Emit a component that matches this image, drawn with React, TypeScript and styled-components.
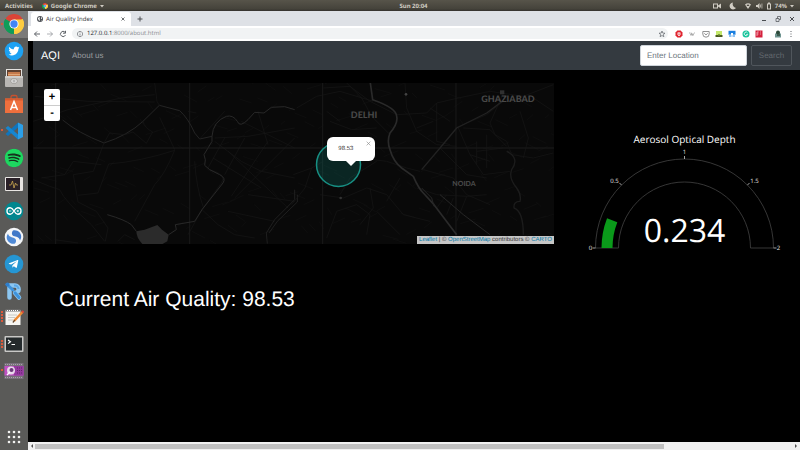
import React from 'react';
import styled, { createGlobalStyle } from 'styled-components';
import { FaTwitter, FaSpotify, FaTelegramPlane } from 'react-icons/fa';

const ui = '"Noto Sans", "Open Sans", sans-serif';
const body = '"Liberation Sans", Arial, sans-serif';
const plot = '"Open Sans", "Noto Sans", sans-serif';

const GlobalStyle = createGlobalStyle`
  *, *::before, *::after { box-sizing: border-box; }
  body { margin: 0; background: #000; font-family: ${body}; text-rendering: geometricPrecision; }
  button, input { font: inherit; margin: 0; text-rendering: inherit; }
  button { padding: 0; border: 0; background: none; color: inherit; }
  ul { list-style: none; margin: 0; padding: 0; }
  h1, h2, p { margin: 0; font-weight: 400; }
  a { text-decoration: none; color: inherit; }
  svg { display: block; }
`;

const Desktop = styled.div`
  min-height: 100vh;
  display: flex;
  flex-direction: column;
  overflow: hidden;
`;

/* System bar */

const SystemBar = styled.header`
  flex: 0 0 11px;
  display: grid;
  grid-template-columns: 1fr auto 1fr;
  align-items: center;
  padding: 0 6px 0 5px;
  background: linear-gradient(#57544a, #45433b 80%, #34322d);
  color: #d0ccc3;
  font: 700 6px/10px ${ui};
`;

const SystemGroup = styled.div<{ $end?: boolean }>`
  display: flex;
  align-items: center;
  justify-content: ${(p) => (p.$end ? 'flex-end' : 'flex-start')};
  gap: ${(p) => (p.$end ? '7px' : '9px')};
`;

const SystemButton = styled.button`
  display: flex;
  align-items: center;
  gap: 3px;
`;

const Clock = styled.time`
  padding-left: 28px;
`;

const Workspace = styled.div`
  flex: 1;
  display: flex;
  min-height: 0;
`;

/* Dock */

const Dock = styled.nav`
  flex: 0 0 28px;
  display: flex;
  flex-direction: column;
  justify-content: space-between;
  background: #5a5a58;
`;

const DockList = styled.ul`
  flex: 0 1 373px;
  display: grid;
  grid-auto-rows: 1fr;
`;

const DockItem = styled.li<{ $active?: boolean }>`
  display: flex;
  background: ${(p) => (p.$active ? '#7b7a78' : 'transparent')};
`;

const DockButton = styled.button`
  flex: 1;
  display: grid;
  grid-template-columns: 4px 20px;
  align-items: center;
`;

const RunningDots = styled.span<{ $count: number }>`
  width: 2px;
  height: ${(p) => p.$count * 3}px;
  margin-left: 1px;
  background: repeating-linear-gradient(#d9583a 0 2px, transparent 2px 3px);
`;

const AppsButton = styled.button`
  height: 27px;
  display: grid;
  place-items: center;
`;

/* Browser */

const Browser = styled.main`
  flex: 1;
  min-width: 0;
  display: flex;
  flex-direction: column;
  background: #000;
`;

const TabStrip = styled.div`
  flex: 0 0 15px;
  display: flex;
  align-items: flex-end;
  padding: 0 4px 0 3px;
  background: #dee1e6;
  color: #4a4d51;
`;

const Tab = styled.div`
  flex: 0 0 100px;
  height: 14px;
  display: flex;
  align-items: center;
  gap: 3px;
  padding: 0 4px 0 6px;
  border-radius: 3px 3px 0 0;
  background: #fff;
  font: 6px/14px ${ui};
  color: #3c4043;
`;

const TabTitle = styled.span`
  flex: 1;
  white-space: nowrap;
`;

const IconButton = styled.button`
  display: grid;
  place-items: center;
  width: 8px;
  height: 14px;
`;

const NewTab = styled(IconButton)`
  margin-left: 5px;
`;

const WindowControls = styled.div`
  margin-left: auto;
  display: flex;
  gap: 6px;
`;

const Toolbar = styled.div`
  flex: 0 0 15px;
  display: flex;
  align-items: center;
  padding: 0 5px;
  background: #fff;
  color: #5f6368;
`;

const NavButtons = styled.div`
  display: flex;
  gap: 5px;
`;

const AddressBar = styled.div`
  flex: 1;
  height: 11px;
  display: flex;
  align-items: center;
  gap: 4px;
  margin: 0 7px 0 5px;
  padding: 0 2px 0 5px;
  border-radius: 6px;
  background: #f1f3f4;
`;

const Address = styled.span`
  flex: 1;
  font: 6px/11px ${plot};
  color: #8a8d91;

  b {
    font-weight: 400;
    color: #202124;
  }
`;

const Extensions = styled.div`
  flex: 0 0 88px;
  display: flex;
  justify-content: space-between;
`;

const ProfileArea = styled.div`
  display: flex;
  gap: 5px;
  margin-left: 6px;
  padding-left: 5px;
`;

/* Web page */

const Page = styled.div`
  flex: 1;
  min-width: 0;
  padding-left: 5px;
  background: #000;
  color: #fff;
`;

const Navbar = styled.nav`
  display: flex;
  align-items: center;
  gap: 12px;
  padding: 4px 8px;
  background: #343a40;
`;

const Brand = styled.a`
  font-size: 11px;
  line-height: 20px;
  color: #fff;
`;

const NavLink = styled.a`
  font-size: 8px;
  line-height: 20px;
  color: #999c9f;
`;

const SearchForm = styled.form`
  margin-left: auto;
  display: flex;
  gap: 4px;
  height: 21px;
`;

const SearchInput = styled.input`
  width: 107px;
  padding: 0 6px;
  border: 1px solid #ced4da;
  border-radius: 2px;
  background: #fff;
  font-size: 8px;
  color: #495057;

  &::placeholder {
    color: #6c757d;
    opacity: 1;
  }
`;

const SearchButton = styled.button`
  width: 41px;
  border: 1px solid #50565c;
  border-radius: 2px;
  font-size: 8px;
  color: #62686e;
`;

const Columns = styled.div`
  display: grid;
  grid-template-columns: 521fr 246fr;
  align-items: start;
  padding-top: 13px;
`;

const MapView = styled.section`
  position: relative;
  height: 161px;
  overflow: hidden;
  background: #090909;
`;

const MapDrawing = styled.svg`
  width: 100%;
  height: 100%;
`;

const ZoomControl = styled.div`
  position: absolute;
  top: 6px;
  left: 11px;
  width: 16px;
  border-radius: 2px;
  background: #fff;
  color: #000;
  font: 700 11px/15px ${body};
`;

const ZoomButton = styled.button`
  display: block;
  width: 100%;
  height: 16px;

  & + & {
    border-top: 1px solid #ccc;
  }
`;

const Popup = styled.div`
  position: absolute;
  top: 33.5%;
  left: 56.5%;
  width: 48px;
  padding: 8px 11px;
  border-radius: 6px;
  background: #fff;
  color: #333;
  font-size: 6px;
  line-height: 8px;

  &::after {
    content: '';
    position: absolute;
    top: 100%;
    left: 50%;
    margin: -1px 0 0 -6px;
    border: 6px solid transparent;
    border-top-color: #fff;
    border-bottom: 0;
  }
`;

const PopupClose = styled.button`
  position: absolute;
  top: 4px;
  right: 4px;
  color: #888;
`;

const Attribution = styled.p`
  position: absolute;
  right: 0;
  bottom: 0;
  padding: 0 2px;
  background: #c6c6c6;
  color: #333;
  font-size: 6px;
  line-height: 8px;
  white-space: nowrap;

  a {
    color: #0078a8;
  }
`;

const GaugePanel = styled.section`
  padding: 50px 0 0 15px;
  text-align: center;
  font-family: ${plot};
`;

const GaugeTitle = styled.h2`
  font-size: 10px;
  line-height: 13px;
`;

const GaugeChart = styled.svg`
  display: block;
  width: 100%;
  height: 108px;
  font-family: ${plot};
`;

const Reading = styled.h1`
  padding: 33px 26px 0;
  font-size: 21px;
  line-height: 26px;
`;

const Scrollbar = styled.div`
  flex: 0 0 6px;
  display: flex;
  align-items: center;
  justify-content: space-between;
  gap: 2px;
  padding: 0 2px;
  background: #f1f1f1;
  color: #505050;
`;

const ScrollTrack = styled.div`
  flex: 1;
  height: 5px;
`;

const ScrollThumb = styled.div`
  width: 83%;
  height: 100%;
  background: #c1c1c1;
`;

/* Icons */

const ChromeIcon = ({ size }: { size: number }) => (
  <svg width={size} height={size} viewBox="0 0 48 48" aria-hidden="true">
    <path d="M24 24 3.2 12A24 24 0 0 1 44.8 12z" fill="#db4437" />
    <path d="M24 24 44.8 12A24 24 0 0 1 24 48z" fill="#ffcd40" />
    <path d="M24 24v24A24 24 0 0 1 3.2 12z" fill="#0f9d58" />
    <path d="M24 13h20.8A24 24 0 0 1 24 48l9.5-18.5z" fill="#ffcd40" />
    <path d="M3.2 12 14.5 29.5 24 35l-6 12.2A24 24 0 0 1 3.2 12z" fill="#0f9d58" />
    <circle cx="24" cy="24" r="11" fill="#fff" />
    <circle cx="24" cy="24" r="8.8" fill="#4285f4" />
  </svg>
);

const Glyph = ({ children }: { children: React.ReactNode }) => (
  <svg width="20" height="20" viewBox="0 0 20 20" fill="none" aria-hidden="true">
    {children}
  </svg>
);

const TwitterApp = () => (
  <Glyph>
    <circle cx="10" cy="10" r="9.3" fill="#1da1f2" />
    <FaTwitter x="4.5" y="4.5" size={11} color="#fff" />
  </Glyph>
);

const FilesApp = () => (
  <Glyph>
    <path d="M2 1h16v9H2z" fill="#e4e2df" />
    <path d="M3 2h14v6H3z" fill="#5e4030" />
    <path d="M4 4h12v4H4z" fill="#c57a4c" />
    <path d="M4 6h12v1H4z" fill="#e0a678" />
    <rect x="1" y="8" width="18" height="11" rx="1" fill="#b9b7b4" />
    <path d="M1 9h18" stroke="#e6e4e1" />
    <rect x="7" y="11" width="6" height="4" rx="1.5" fill="#efefef" stroke="#8a8885" strokeWidth=".7" />
    <path d="M8.500 13h3" stroke="#777" />
  </Glyph>
);

const SoftwareApp = () => (
  <Glyph>
    <path d="M7 5V3q0-1.500 1.500-1.500h3Q13 1.500 13 3v2" stroke="#c9502d" strokeWidth="1.300" />
    <path d="M1 4.500h18V19H1z" fill="#ee6f3d" />
    <path d="M1 4.500h18v2H1z" fill="#d85a2e" />
    <path d="m6.500 16 3.500-8.500 3.500 8.500M7.500 13.500h5" stroke="#fff" strokeWidth="1.500" />
  </Glyph>
);

const CodeApp = () => (
  <Glyph>
    <path d="M14 1.500 19 4v12l-5 2.500z" fill="#2b9fe8" />
    <path d="m14 1.500v5L4 15l-2.500-2z" fill="#0f75bd" />
    <path d="m14 18.500v-5L4 5 1.500 7z" fill="#1686d0" />
  </Glyph>
);

const SpotifyApp = () => (
  <Glyph>
    <circle cx="10" cy="10" r="9" fill="#16301e" />
    <FaSpotify x="0.500" y="0.500" size={19} color="#1ed760" />
  </Glyph>
);

const MonitorApp = () => (
  <Glyph>
    <rect x="1" y="3" width="18" height="14" rx="1" fill="#e9e6e3" />
    <path d="M2 4h14v12H2z" fill="#2a2027" />
    <path d="M5 11h2l1.500-4 1.500 7 1.500-5 1 2H14" stroke="#c9a650" strokeWidth=".8" />
  </Glyph>
);

const ArduinoApp = () => (
  <Glyph>
    <circle cx="10" cy="10" r="9.3" fill="#00878f" />
    <path
      d="M10 10C8.500 7.500 7.500 6.800 6.200 6.800a3.200 3.200 0 0 0 0 6.400c1.300 0 2.300-.7 3.800-3.200s2.500-3.200 3.800-3.200a3.200 3.200 0 0 1 0 6.400c-1.300 0-2.300-.7-3.800-3.200z"
      stroke="#fff"
      strokeWidth="1.400"
    />
    <path d="M5 10h2.400M12.600 10H15M13.800 8.800v2.400" stroke="#fff" strokeWidth=".8" />
  </Glyph>
);

const SimplenoteApp = () => (
  <Glyph>
    <circle cx="10" cy="10" r="9.300" fill="#f4f6f8" />
    <path d="M15.500 5.200A7 7 0 0 1 16 13.500C15.500 10.500 13 10 10.500 9.300 7.500 8.500 7.300 5.500 9 3.400c2.500-.8 5 .3 6.500 1.800z" fill="#4078c8" />
    <path d="M4.500 14.800A7 7 0 0 1 4 6.500c.5 3 3 3.500 5.500 4.200 3 .8 3.200 3.800 1.500 5.900-2.500.8-5-.3-6.500-1.800z" fill="#4f8ad6" />
  </Glyph>
);

const TelegramApp = () => (
  <Glyph>
    <circle cx="10" cy="10" r="9.300" fill="#2596d3" />
    <FaTelegramPlane x="4" y="4.500" size={11} color="#fff" />
  </Glyph>
);

const RoutesApp = () => (
  <Glyph>
    <path d="M5.500 16.500V4.500H11a3.600 3.600 0 0 1 0 7.300l4 4.700" stroke="#8cc6f0" strokeWidth="4.500" strokeLinejoin="round" strokeLinecap="round" />
    <path d="M3 3.500 9 9M11 11.800l4 4.700" stroke="#3d93dc" strokeWidth="3" strokeLinecap="round" />
    <path d="M10 4.500h1a3.600 3.600 0 0 1 3.500 3.600" stroke="#5aa8e6" strokeWidth="2" />
    <circle cx="3.500" cy="3.500" r="2" fill="#2f7ecb" />
  </Glyph>
);

const NotesApp = () => (
  <Glyph>
    <path d="M1.500 3h15v15h-15z" fill="#f6f5f1" />
    <path d="M1.500 2.500h15v2h-15z" fill="#777" />
    <path d="M3 3.500h12" stroke="#fff" strokeDasharray="1 1" />
    <path d="M4 8h9M4 10.500h7M4 13h5" stroke="#bdbdb8" strokeWidth=".8" />
    <path d="m18.500 5-8.500 9" stroke="#ee8a32" strokeWidth="2.500" />
    <path d="m10.800 13.200-2 2.300" stroke="#5f4630" strokeWidth="1.200" />
    <path d="m19.400 4-1.200 1.300" stroke="#d6433d" strokeWidth="2.500" />
  </Glyph>
);

const TerminalApp = () => (
  <Glyph>
    <rect x=".5" y="2" width="19" height="16" rx="1" fill="#c8c8c6" />
    <path d="M2 3.500h16v13H2z" fill="#242a2c" />
    <path d="m4 6 2.500 1.800L4 9.600M7.500 10.500h3.500" stroke="#fff" strokeWidth="1.100" />
  </Glyph>
);

const VideoApp = () => (
  <Glyph>
    <rect x=".5" y="2" width="19" height="16" fill="#77707a" />
    <path d="M.5 5h19v9.500H.5z" fill="#c04fc4" />
    <path d="M10 5h9.500v9.500H10z" fill="#94389e" />
    <path d="M1 3.500h18M1 16.500h18" stroke="#aaa3ad" strokeWidth="1" strokeDasharray="1 1" />
    <circle cx="7" cy="9.500" r="4" fill="#e9d9ec" />
    <circle cx="7.500" cy="9" r="2" fill="#6a3a78" />
    <path d="m3 14 3-3" stroke="#fff" strokeWidth="1.500" />
    <path d="M13 7h5M13 9.500h5M13 12h5" stroke="#5f2468" strokeWidth="1" strokeDasharray="1 1" />
  </Glyph>
);

const AppGrid = () => (
  <svg width="14" height="14" viewBox="0 0 14 14" fill="#f2f2f0" aria-hidden="true">
    {[2, 7, 12].map((y) => [2, 7, 12].map((x) => <circle key={`${x}-${y}`} cx={x} cy={y} r="1.300" />))}
  </svg>
);

const Line = ({ d, size = 8, width = 1 }: { d: string; size?: number; width?: number }) => (
  <svg width={size} height={size} viewBox="0 0 8 8" fill="none" stroke="currentColor" strokeWidth={width} aria-hidden="true">
    <path d={d} />
  </svg>
);

const Solid = ({ d, width = 8 }: { d: string; width?: number }) => (
  <svg width={width} height="8" viewBox={`0 0 ${width} 8`} fill="currentColor" fillRule="evenodd" aria-hidden="true">
    <path d={d} />
  </svg>
);

const Small = ({ children }: { children: React.ReactNode }) => (
  <svg width="8" height="8" viewBox="0 0 8 8" fill="none" aria-hidden="true">
    {children}
  </svg>
);

const dockApps = [
  { name: 'Google Chrome', icon: <ChromeIcon size={20} />, dots: 1, active: true },
  { name: 'Twitter', icon: <TwitterApp />, dots: 0 },
  { name: 'Files', icon: <FilesApp />, dots: 0 },
  { name: 'Software', icon: <SoftwareApp />, dots: 0 },
  { name: 'Visual Studio Code', icon: <CodeApp />, dots: 1 },
  { name: 'Spotify', icon: <SpotifyApp />, dots: 0 },
  { name: 'System Monitor', icon: <MonitorApp />, dots: 0 },
  { name: 'Arduino', icon: <ArduinoApp />, dots: 0 },
  { name: 'Simplenote', icon: <SimplenoteApp />, dots: 0 },
  { name: 'Telegram', icon: <TelegramApp />, dots: 0 },
  { name: 'Routes', icon: <RoutesApp />, dots: 0 },
  { name: 'Text Editor', icon: <NotesApp />, dots: 4 },
  { name: 'Terminal', icon: <TerminalApp />, dots: 3 },
  { name: 'Screen Recorder', icon: <VideoApp />, dots: 1 },
];

const extensions = [
  {
    name: 'AdBlock',
    icon: (
      <Small>
        <path d="M2.400.5h3.200l1.900 1.900v3.200L5.600 7.500H2.400L.5 5.600V2.400z" fill="#e0242f" />
        <path d="M3 2.500v2.500q1 1.500 2 0V2.500M4 2v2" stroke="#fff" strokeWidth=".9" />
      </Small>
    ),
  },
  {
    name: 'Wikipedia',
    icon: (
      <Small>
        <path d="m1.500 2.500 1.500 3 1-2 1 2 1.500-3M4.500 5.500l-1.500-3" stroke="#999" strokeWidth=".7" />
      </Small>
    ),
  },
  {
    name: 'Pocket',
    icon: (
      <Small>
        <path d="M.8 1.500h6.400V4a3.200 3.200 0 0 1-6.400 0zM2.300 3.300 4 4.900l1.700-1.600" stroke="#777" strokeWidth=".8" />
      </Small>
    ),
  },
  {
    name: 'Video',
    icon: (
      <Small>
        <path d="M1 1h6v4H1z" fill="#c4e86a" />
        <path d="M.5 5h7v2h-7z" fill="#4a5a20" />
        <path d="M3 4h2v1.500H3z" fill="#7c9c3c" />
      </Small>
    ),
  },
  {
    name: 'Calendar',
    icon: (
      <Small>
        <path d="M.5.800h7v4h-7z" fill="#1a7fe0" />
        <path d="M1 4.500h2.500v2.500H1zM4.500 4.500H7v2.500H4.500z" fill="#8ec2f2" />
        <path d="M3 3h2v2H3z" fill="#fff" />
      </Small>
    ),
  },
  {
    name: 'Grammarly',
    icon: (
      <Small>
        <circle cx="4" cy="4" r="3.500" fill="#15c39a" />
        <path d="M5.600 3A1.800 1.800 0 1 0 5.700 4.500H4.200" stroke="#fff" strokeWidth=".8" />
      </Small>
    ),
  },
  {
    name: 'Flipboard',
    icon: (
      <Small>
        <path d="M.5.5h7v7h-7z" fill="#d4213d" />
        <path d="M2 6V2h1.800M2 4h1.500M5 2h1M5 4h1" stroke="#f3b6bf" strokeWidth=".8" />
      </Small>
    ),
  },
];

/* Map data, on a grid three times finer than a pixel */

const westRoads = [
  'M104 126Q150 165 228 195Q300 172 345 130L394 82L455 98Q480 120 500 165L515 183L552 175',
  'M228 195L196 280L136 290L150 372L205 400L240 450L232 490',
  'M380 15L387 70L394 82M345 130Q350 150 374 162L355 196L315 162L290 170L245 165L228 195',
  'M242 258L210 345L150 352M242 258Q340 250 440 217',
  'M440 217Q410 290 380 320L320 430M395 118L440 215M500 250Q505 330 526 388',
  'M16 305L65 325L95 335Q110 370 190 440L230 490M40 300L110 290L136 250L220 260',
  'M545 275Q600 290 580 315L522 395L570 440L620 470L680 480M522 395L480 470',
  'M560 190L640 250L700 280L800 300M590 180L540 270M650 180L590 290M720 190L610 355',
  'M800 180L690 290L620 360M555 240L700 330M600 220L780 390M660 350L800 370M600 400L740 430',
  'M640 130L800 210M690 100L720 200M560 180L660 175L800 150M480 100L505 105M590 100L515 183',
  'M16 130L120 95L280 60L380 50M20 55L180 70L380 72M270 490L290 470L320 485M80 485L150 495',
];

const eastRoads = [
  'M100 30L180 25L240 70L320 110L410 105L440 75L505 60L600 40L700 55L790 20',
  'M20 90L80 55L150 40L250 70M170 15L215 60L245 115L300 170M440 75L440 190L480 200',
  'M345 15L350 90L380 160L440 200L500 205M495 150L590 110L640 70M505 150L540 230L600 250',
  'M640 45L600 135L615 170L650 190L665 230L730 240L790 225M520 150L600 155L650 205',
  'M10 290L65 270L100 250M65 270L45 330L5 380M210 240L290 250L350 270L390 280',
  'M90 350L160 360L230 330L290 350M110 480L140 400L200 380L240 410L230 470M150 350L180 300L260 250',
  'M240 330L250 390L210 440M290 350L340 410L420 430M330 300L290 370M260 400L330 470',
  'M400 275L490 300L530 350L600 380M450 210L530 290L590 300M540 230L580 290L660 280',
  'M380 330L440 350L530 355L590 350M470 350L440 390M490 360L470 410M530 355L500 430',
  'M690 100L715 180L700 240M730 60L790 100M560 220L640 210M560 190L560 260M590 170L590 270',
  'M420 90L480 130M380 150L430 130M120 130L185 155L260 150M110 100L150 130',
];

/* A deterministic field of short streets that thickens the city blocks */
const streets = Array.from({ length: 250 }, (_, i) => {
  const x = (i * 379) % 1560;
  const y = (i * 167 + ((i * i) % 61)) % 480;
  const dx = 12 + ((i * 13) % 36);
  const dy = i % 2 ? 12 + (i % 11) : -10 - (i % 9);
  return `M${x} ${y}l${dx} ${dy}`;
}).join('');

const MapArt = () => (
  <MapDrawing viewBox="0 0 521 161" preserveAspectRatio="xMidYMid slice" fill="none" role="img" aria-label="Map of Delhi">
    <g transform="scale(.33333)" strokeWidth="2">
      <path d={streets} stroke="#111" />
    </g>
    <g transform="translate(-5 -5) scale(.33333)" strokeLinejoin="round">
      <path d="M83 0V500M485 0V500" stroke="#1a1a1a" strokeWidth="3" />
      {westRoads.map((d, i) => (
        <path key={d} d={d} stroke={i < 1 ? '#242424' : '#161616'} strokeWidth={i < 1 ? 3 : 2} />
      ))}
      <path d="M325 460L350 455L388 441L402 455L422 470L418 490L400 500H345Q325 480 325 460Z" fill="#2b2b2b" />
      <path
        d="M238 410Q290 425 310 440L325 460M422 470L445 455L442 440L500 430L522 395L585 315Q595 300 575 290L545 275L530 262Q535 245 528 230L552 190L552 175Q555 130 595 115Q615 110 628 130Q635 150 660 125L680 103L708 105L730 88L770 86L800 95"
        stroke="#282828"
        strokeWidth="3"
      />
      <path d="M800 335V365L740 425L715 465L718 497M808 350V372L748 430L723 465" stroke="#2b2b2b" strokeWidth="2" />
    </g>
    <g transform="translate(257 -5) scale(.33333)" strokeLinejoin="round">
      <path d="M98 0V500M498 0V500" stroke="#1a1a1a" strokeWidth="3" />
      <path d="M-770 210H800" stroke="#1d1d1d" strokeWidth="3" />
      {eastRoads.map((d) => (
        <path key={d} d={d} stroke="#171717" strokeWidth="2" />
      ))}
      <path
        d="M241 15L248 65Q320 90 320 115Q325 135 300 165Q290 190 300 215Q310 250 335 270L370 295Q385 330 400 345L432 380L500 470"
        stroke="#2a2a2a"
        strokeWidth="5"
      />
      <path d="M395 330L425 360L432 385M450 350L520 410L600 470" stroke="#262626" strokeWidth="3" />
      <path d="M395 275L450 210L500 150L590 105L637 70" stroke="#222" strokeWidth="4" />
      <path d="M650 220Q690 240 665 275Q655 300 680 330Q695 350 690 370Q670 370 672 390Q700 400 700 470" stroke="#1c1c1c" strokeWidth="4" />
      <path d="M630 37h13v12h-13z" fill="#303030" />
      <circle cx="348" cy="49" r="4" fill="#444" />
      <circle cx="152" cy="360" r="4" fill="#333" />
    </g>
    <g fill="#484848" fontFamily="Lato, sans-serif" fontWeight="900" textAnchor="middle">
      <text x="331" y="35" fontSize="9">DELHI</text>
      <text x="475" y="19" fontSize="9">GHAZIABAD</text>
      <text x="431" y="103" fontSize="7">NOIDA</text>
    </g>
    <circle cx="305.500" cy="81.500" r="22" fill="#0f9d8e" fillOpacity=".2" stroke="#178f83" strokeWidth="1.500" />
  </MapDrawing>
);

/* Gauge */

const cx = 115;
const cy = 102;
const gaugeMax = 2;

const at = (value: number, r: number) => {
  const a = Math.PI * (1 - value / gaugeMax);
  return `${(cx + r * Math.cos(a)).toFixed(2)} ${(cy - r * Math.sin(a)).toFixed(2)}`;
};

const band = (to: number, outer: number, inner: number) =>
  `M${at(0, outer)}A${outer} ${outer} 0 0 1 ${at(to, outer)}L${at(to, inner)}A${inner} ${inner} 0 0 0 ${at(0, inner)}Z`;

const ticks = [
  { value: 0, label: '0', x: 21, y: 104 },
  { value: 0.5, label: '0.5', x: 45, y: 37 },
  { value: 1, label: '1', x: 115, y: 8 },
  { value: 1.5, label: '1.5', x: 185, y: 37 },
  { value: 2, label: '2', x: 209, y: 104 },
];

const Gauge = ({ value }: { value: number }) => (
  <GaugeChart viewBox="0 0 230 108" role="img" aria-label={`Aerosol optical depth ${value}`}>
    <path d={band(gaugeMax, 89, 66)} fill="none" stroke="#444" strokeWidth=".8" />
    <path d={band(value, 83, 72)} fill="#0a9a1a" />
    {ticks.map((t) => (
      <path key={t.label} d={`M${at(t.value, 89)}L${at(t.value, 92)}`} stroke="#ccc" strokeWidth=".8" />
    ))}
    <g fill="#e4e4e4" fontSize="6" textAnchor="middle">
      {ticks.map((t) => (
        <text key={t.label} x={t.x} y={t.y}>
          {t.label}
        </text>
      ))}
    </g>
    <text x={cx} y="96" fontSize="32" fill="#fff" textAnchor="middle">
      {value}
    </text>
  </GaugeChart>
);

export default function App() {
  return (
    <>
      <GlobalStyle />
      <Desktop>
        <SystemBar>
          <SystemGroup>
            <SystemButton>Activities</SystemButton>
            <SystemButton>
              <ChromeIcon size={6} />
              Google Chrome
              <Solid width={4} d="M0 3h4L2 5.500z" />
            </SystemButton>
          </SystemGroup>
          <Clock>Sun 20:04</Clock>
          <SystemGroup $end>
            <Solid width={10} d="M1 1.500h5v5H1zM2 2.500v3h3v-3zM6 3.500 9 1.500v5L6 4.500z" />
            <SystemButton aria-label="Night light">
              <Solid d="M4 .5A3.500 3.500 0 1 0 7 6 4 4 0 0 1 4 .5z" />
            </SystemButton>
            <SystemButton aria-label="Status">
              <Solid d="M1 2.500Q4 0 7 2.500L4 7zM2.500 3Q4 2 5.500 3L4.800 4H3.200z" />
              <Solid d="M1 3h1.500L4.500 1v6L2.500 5H1zM5.200 2.500h.7v3h-.7zM6.600 1.500h.7v5h-.7z" />
              <Solid width={6} d="M2 .5h2v1h1v6H1v-6h1zM2 2.500v4h2v-4z" />
              74%
              <Solid width={4} d="M0 3h4L2 5.500z" />
            </SystemButton>
          </SystemGroup>
        </SystemBar>
        <Workspace>
          <Dock aria-label="Applications">
            <DockList>
              {dockApps.map((app) => (
                <DockItem key={app.name} $active={app.active}>
                  <DockButton aria-label={app.name}>
                    <RunningDots $count={app.dots} />
                    {app.icon}
                  </DockButton>
                </DockItem>
              ))}
            </DockList>
            <AppsButton aria-label="Show applications">
              <AppGrid />
            </AppsButton>
          </Dock>
          <Browser>
            <TabStrip>
              <Tab>
                <svg width="6" height="6" viewBox="0 0 6 6" aria-hidden="true">
                  <circle cx="3" cy="3" r="3" fill="#4d5156" />
                  <path d="M.8 2.500 2 1l1 .5-.5 1.200L3 4l-.8 1zM4 .8l1.200 1.500L4 3.200zM4.500 4l.5.300-.8.7z" fill="#fff" />
                </svg>
                <TabTitle>Air Quality Index</TabTitle>
                <IconButton aria-label="Close tab">
                  <Line size={6} d="M2 2l4 4M6 2 2 6" />
                </IconButton>
              </Tab>
              <NewTab aria-label="New tab">
                <Line d="M4 1.500v5M1.500 4h5" />
              </NewTab>
              <WindowControls>
                <IconButton aria-label="Minimize">
                  <Line d="M2 5.500h4" />
                </IconButton>
                <IconButton aria-label="Restore">
                  <Line width={0.7} d="M2 3.500h3v3H2zM3.500 3.500v-2h3v3H5" />
                </IconButton>
                <IconButton aria-label="Close">
                  <Line d="M2 2l4 4M6 2 2 6" />
                </IconButton>
              </WindowControls>
            </TabStrip>
            <Toolbar>
              <NavButtons>
                <IconButton aria-label="Back">
                  <Line d="M7 4H1.500M4 1.500 1.500 4 4 6.500" />
                </IconButton>
                <IconButton aria-label="Forward" disabled>
                  <Line width={0.5} d="M1 4h5.500M4 1.500 6.500 4 4 6.500" />
                </IconButton>
                <IconButton aria-label="Reload">
                  <Line d="M6.500 5A2.600 2.600 0 1 1 6 2.200M6.500.8v2.400H4" />
                </IconButton>
              </NavButtons>
              <AddressBar>
                <Line size={6} width={0.9} d="M4 .5a3.500 3.500 0 1 0 .1 0M4 3.500v2.500M4 2v.8" />
                <Address>
                  <b>127.0.0.1</b>:8000/about.html
                </Address>
                <IconButton aria-label="Bookmark">
                  <Line width={0.7} d="m4 1 .8 2.100 2.200.1-1.700 1.400.6 2.100L4 5.500 2.100 6.700l.6-2.100L1 3.200l2.200-.1z" />
                </IconButton>
              </AddressBar>
              <Extensions>
                {extensions.map((e) => (
                  <IconButton key={e.name} aria-label={e.name}>
                    {e.icon}
                  </IconButton>
                ))}
              </Extensions>
              <ProfileArea>
                <IconButton aria-label="Profile">
                  <Small>
                    <path d="M1 4q3-4 6 0v3.500H1z" fill="#6f9490" />
                    <circle cx="4" cy="2.500" r="2" fill="#2c4a3a" />
                    <path d="M3 4h3v2H3z" fill="#3d5c50" />
                  </Small>
                </IconButton>
                <IconButton aria-label="Menu">
                  <Solid d="M3.500 1h1v1h-1zM3.500 3.500h1v1h-1zM3.500 6h1v1h-1z" />
                </IconButton>
              </ProfileArea>
            </Toolbar>
            <Page>
              <Navbar>
                <Brand href="#home">AQI</Brand>
                <NavLink href="#about">About us</NavLink>
                <SearchForm onSubmit={(e) => e.preventDefault()}>
                  <SearchInput type="search" placeholder="Enter Location" aria-label="Enter Location" />
                  <SearchButton type="submit">Search</SearchButton>
                </SearchForm>
              </Navbar>
              <Columns>
                <MapView>
                  <MapArt />
                  <ZoomControl>
                    <ZoomButton aria-label="Zoom in">+</ZoomButton>
                    <ZoomButton aria-label="Zoom out">-</ZoomButton>
                  </ZoomControl>
                  <Popup>
                    98.53
                    <PopupClose aria-label="Close popup">
                      <Line size={5} d="M1 1l6 6M7 1 1 7" />
                    </PopupClose>
                  </Popup>
                  <Attribution>
                    <a href="#leaflet">Leaflet</a> | © <a href="#osm">OpenStreetMap</a> contributors © <a href="#carto">CARTO</a>
                  </Attribution>
                </MapView>
                <GaugePanel>
                  <GaugeTitle>Aerosol Optical Depth</GaugeTitle>
                  <Gauge value={0.234} />
                </GaugePanel>
              </Columns>
              <Reading>Current Air Quality: 98.53</Reading>
            </Page>
            <Scrollbar>
              <Solid width={3} d="M3 2v4L1 4z" />
              <ScrollTrack>
                <ScrollThumb />
              </ScrollTrack>
              <Solid width={3} d="M0 2v4l2-2z" />
            </Scrollbar>
          </Browser>
        </Workspace>
      </Desktop>
    </>
  );
}
